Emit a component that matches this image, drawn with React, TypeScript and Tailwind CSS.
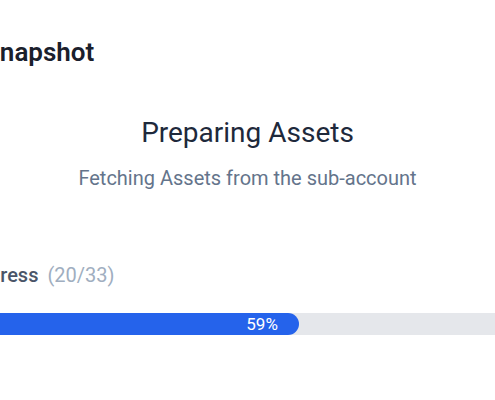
export default function App() {
    const done = 20;
    const total = 33;
    const pct = 59;

    return (
        <div className="w-[495px] h-[400px] overflow-hidden bg-white font-['Roboto','Liberation_Sans',sans-serif]">
            <div className="-ml-[38px] w-[571px] flex flex-col">
                <div className="pt-[39px] pl-[22px]">
                    <h1 className="text-[26px] leading-none font-semibold text-[#1a202c]">Snapshot</h1>
                </div>

                <div className="flex flex-col items-center mt-[54px]">
                    <h2 className="text-[28px] leading-none text-[#1e293b]">Preparing Assets</h2>
                    <p className="mt-[21px] text-[20px] leading-none text-[#64748b]">
                        Fetching Assets from the sub-account
                    </p>
                </div>

                <div className="mt-[77px] -ml-[4px] flex items-center text-[20px] leading-none">
                    <span className="font-medium text-[#4a5568]">Progress</span>
                    <span className="ml-[9px] text-[#a0aec0]">({done}/{total})</span>
                </div>

                <div className="mt-[28px] h-[22px] w-full rounded-full bg-[#e5e7eb] flex">
                    <div
                        className="h-full rounded-full bg-[#2563eb] flex items-center justify-end pr-[21px]"
                        style={{ width: `${pct}%` }}
                    >
                        <span className="text-[17px] leading-none text-white">{pct}%</span>
                    </div>
                </div>
            </div>
        </div>
    );
}
